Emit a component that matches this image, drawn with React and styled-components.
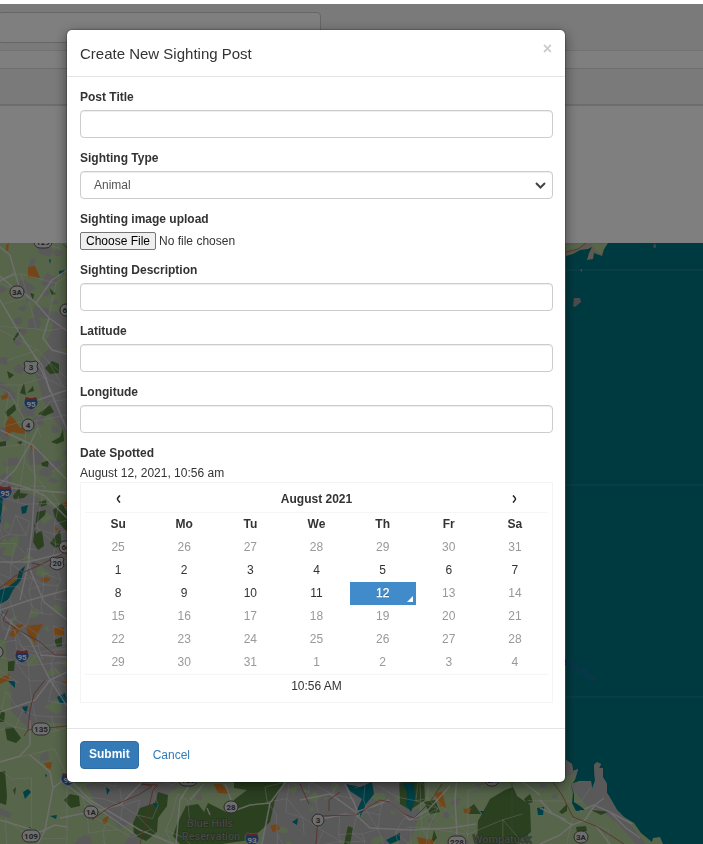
import React, { useState } from "react";
import styled, { createGlobalStyle, css } from "styled-components";

const GlobalStyle = createGlobalStyle`
  *, *::before, *::after { box-sizing: border-box; }
  body {
    margin: 0;
    background: #fff;
    color: #333;
    font: 12px/17px "Liberation Sans", Arial, Helvetica, sans-serif;
  }
  input, select, button { font: inherit; color: inherit; }
`;

/* ---------- page behind the dialog ---------- */

const Page = styled.div`
  display: flex;
  flex-direction: column;
  height: 100vh;
  overflow: hidden;
`;

const TopBar = styled.header`
  margin-top: 4px;
  padding: 8px 0 7px;
  background: #f5f5f5;
  border-bottom: 1px solid #e4e4e4;
`;

const SearchBox = styled.input`
  display: block;
  width: 46%;
  height: 31px;
  margin-left: -2px;
  padding: 0 12px;
  background: #fff;
  border: 1px solid #ccc;
  border-radius: 4px;
`;

const SubBar = styled.div`
  height: 38px;
  margin-top: 17px;
  background: #f5f5f5;
  border-top: 1px solid #ddd;
  border-bottom: 2px solid #dadada;
`;

const MapArea = styled.main`
  flex: 1;
  min-height: 0;
  margin-top: 137px;
`;

const MapSvg = styled.svg`
  display: block;
  width: 100%;
  height: 100%;
`;

/* ---------- dialog ---------- */

const Backdrop = styled.div`
  position: fixed;
  inset: 4px 0 0;
  overflow: auto;
  background: rgba(0, 0, 0, 0.5);
`;

const Dialog = styled.section`
  margin: 26px 138px 26px 67px;
  background: #fff;
  border-radius: 5px;
  box-shadow: 0 4px 13px rgba(0, 0, 0, 0.5), 0 0 1px 1px rgba(0, 0, 0, 0.2);
`;

const DialogHeader = styled.header`
  display: flex;
  justify-content: space-between;
  align-items: flex-start;
  padding: 14px 13px 12px;
  border-bottom: 1px solid #e5e5e5;
`;

const DialogTitle = styled.h4`
  margin: 0;
  font-size: 15px;
  line-height: 20px;
  font-weight: 400;
`;

const CloseButton = styled.button`
  padding: 0;
  border: 0;
  background: none;
  color: #ccc;
  font-size: 16px;
  line-height: 10px;
  font-weight: 700;
  cursor: pointer;
`;

const DialogBody = styled.div`
  padding: 12px 12px 25px 13px;
`;

const DialogFooter = styled.footer`
  display: flex;
  gap: 4px;
  padding: 12px 13px 13px;
  border-top: 1px solid #e5e5e5;
`;

const Field = styled.div`
  display: flex;
  flex-direction: column;
  margin-bottom: 12px;
`;

const Label = styled.label`
  margin-bottom: 4px;
  font-weight: 700;
`;

const controlStyle = css`
  width: 100%;
  height: 28px;
  padding: 0 10px;
  background: #fff;
  color: #555;
  border: 1px solid #ccc;
  border-radius: 4px;
  box-shadow: inset 0 1px 1px rgba(0, 0, 0, 0.075);
`;

const TextInput = styled.input`
  ${controlStyle}
`;

const SelectWrap = styled.div`
  position: relative;
`;

const Select = styled.select`
  ${controlStyle}
  display: block;
  padding: 0 13px;
  appearance: none;
`;

const Chevron = styled.svg`
  position: absolute;
  right: 7px;
  top: 11px;
  width: 11px;
  height: 7px;
  pointer-events: none;
`;

const FileInput = styled.input`
  height: 18px;
  line-height: 18px;

  &::file-selector-button {
    height: 18px;
    margin: 0 3px 0 0;
    padding: 0 5px;
    font: inherit;
    line-height: 16px;
    color: #000;
    background: #efefef;
    border: 1px solid #767676;
    border-radius: 2px;
  }
`;

const DateGroup = styled.div`
  display: flex;
  flex-direction: column;
`;

const DateHeading = styled.span`
  margin-bottom: 2px;
  font-weight: 700;
`;

const DateValue = styled.output`
  line-height: 18px;
`;

const Picker = styled.div`
  padding: 4px 4px 3px;
  border: 1px solid #f4f4f4;
`;

const Calendar = styled.table`
  width: 100%;
  table-layout: fixed;
  border-collapse: collapse;
  text-align: center;

  th, td { height: 23px; padding: 0; }
`;

const MonthRow = styled.tr`
  border-bottom: 1px solid #f6f6f6;
  && th { height: 25px; }
`;

const WeekdayRow = styled.tr`
  && th { height: 24px; }
`;

const TimeRow = styled.tr`
  border-top: 1px solid #f6f6f6;
  && td { height: 24px; }
`;

const BareButton = styled.button`
  display: block;
  width: 100%;
  height: 23px;
  padding: 0;
  border: 0;
  background: none;
  font-weight: ${(p) => (p.$bold ? 700 : 400)};
  line-height: 23px;
  cursor: pointer;
`;

const Arrow = styled.svg`
  display: block;
  margin: 0 auto;
  width: 5px;
  height: 8px;
`;

const DayButton = styled(BareButton)`
  position: relative;
  color: ${(p) => (p.$muted ? "#999" : "#333")};

  ${(p) =>
    p.$active &&
    css`
      color: #fff;
      background: #428bca;
      text-shadow: 0 -1px 0 rgba(0, 0, 0, 0.25);
      -webkit-text-stroke: 0.3px #fff;

      &::before {
        content: "";
        position: absolute;
        right: 3px;
        bottom: 3px;
        border-left: 6px solid transparent;
        border-bottom: 6px solid #fff;
      }
    `}
`;

const SubmitButton = styled.button`
  height: 28px;
  padding: 0 8px;
  color: #fff;
  font-weight: 700;
  background: #337ab7;
  border: 1px solid #2e6da4;
  border-radius: 4px;
  cursor: pointer;
`;

const CancelLink = styled.a`
  padding: 0 10px;
  line-height: 28px;
  color: #337ab7;
  text-decoration: none;
`;

/* ---------- map ---------- */

const C = {
  sea: "#007582",
  land: "#aeca97",
  urban: "#b2b2b2",
  forest: "#55803f",
  orange: "#e88a2c",
  road: "#e8e2e8",
  rail: "#b05a48",
  water: "#00808f",
};

const Road = styled.path`
  fill: none;
  stroke: ${(p) => (p.$rail ? C.rail : C.road)};
  stroke-width: ${(p) => (p.$w ? p.$w : 1)};
  stroke-linejoin: round;
  opacity: ${(p) => (p.$w > 1 || p.$rail ? 0.8 : 0.45)};
`;

const PlaceName = styled.text`
  font: 500 11px Roboto, sans-serif;
  fill: #8a9482;
  stroke: #46583c;
  stroke-width: 1px;
  paint-order: stroke;
  text-anchor: middle;
`;

const BayName = styled.text`
  font: 500 10px Roboto, sans-serif;
  fill: #1f68a0;
`;

const ShieldText = styled.text`
  font: 700 8px Roboto, sans-serif;
  text-anchor: middle;
  fill: ${(p) => (p.$light ? "#fff" : "#444")};
`;

function Route({ x, y, children }) {
  const chars = String(children).length;
  const w = [12, 14, 18][chars - 1];
  return (
    <g>
      <rect x={x - w / 2} y={y - 6} width={w} height="12" rx="6" fill="#ddd" stroke="#555" strokeWidth="1" />
      <ShieldText x={x} y={y + 3}>{children}</ShieldText>
    </g>
  );
}

function UsRoute({ x, y, children }) {
  return (
    <g transform={`translate(${x} ${y})`}>
      <path d="M-7 -4 L-5 -6 Q0 -4 5 -6 L7 -4 Q5 -1 7 3 Q6 6 0 7 Q-6 6 -7 3 Q-5 -1 -7 -4Z" fill="#ddd" stroke="#555" />
      <ShieldText y="3">{children}</ShieldText>
    </g>
  );
}

function Interstate({ x, y, children }) {
  return (
    <g transform={`translate(${x} ${y})`}>
      <path d="M-5 -6 Q0 -4 5 -6 Q9 0 5 4 Q3 6 0 7 Q-3 6 -5 4 Q-9 0 -5 -6Z" fill="#3767b0" stroke="#ddd" strokeWidth="0.6" />
      <path d="M-5 -6 Q0 -4 5 -6 L6 -3 H-6Z" fill="#c94747" />
      <ShieldText y="4" $light>{children}</ShieldText>
    </g>
  );
}

/* Small seeded generator, so the neighbourhood texture is the same on every draw. */
function seeded(seed) {
  let s = seed;
  return () => {
    s = (s * 16807) % 2147483647;
    return s / 2147483647;
  };
}

function patches(seed, count, [x, y, w, h], size) {
  const r = seeded(seed);
  let d = "";
  for (let i = 0; i < count; i += 1) {
    const cx = x + r() * w;
    const cy = y + r() * h;
    const n = 6 + Math.floor(r() * 3);
    const rad = size * (0.4 + r());
    for (let k = 0; k < n; k += 1) {
      const a = (k / n) * Math.PI * 2;
      const q = rad * (0.5 + r() * 0.8);
      d += `${k ? "L" : "M"}${(cx + Math.cos(a) * q * 1.2).toFixed(1)} ${(cy + Math.sin(a) * q).toFixed(1)}`;
    }
    d += "Z";
  }
  return d;
}

function streets(seed, [x, y, w, h], step) {
  const r = seeded(seed);
  const cols = Math.ceil(w / step) + 1;
  const rows = Math.ceil(h / step) + 1;
  const pts = [];
  for (let j = 0; j < rows; j += 1) {
    for (let i = 0; i < cols; i += 1) {
      pts.push([(x + (i + r() * 0.8) * step).toFixed(1), (y + (j + r() * 0.8) * step).toFixed(1)]);
    }
  }
  let d = "";
  for (let j = 0; j < rows; j += 1) {
    for (let i = 0; i < cols; i += 1) {
      const p = pts[j * cols + i];
      if (i + 1 < cols && r() < 0.65) d += `M${p}L${pts[j * cols + i + 1]}`;
      if (j + 1 < rows && r() < 0.7) d += `M${p}L${pts[(j + 1) * cols + i]}`;
      if (j + 1 < rows && i + 1 < cols && r() < 0.2) d += `M${p}L${pts[(j + 1) * cols + i + 1]}`;
    }
  }
  return d;
}

const LAND =
  "M0 243H566V760L572 764L573 771L578 769L575 780L571 785L573 793L572 803L576 811L585 810L580 806L574 802V794L571 784L579 781L591 781L592 789L595 781L594 765L597 762L601 764L599 768L603 768L603 777L607 784V793L612 801L617 810L624 817L634 823L641 833L652 842L653 838L660 837L663 844H0Z";

function SightingsMap() {
  return (
    <MapSvg viewBox="0 243 703 601" preserveAspectRatio="xMinYMin slice" role="img" aria-label="Map of sightings">
      <rect x="0" y="243" width="2000" height="1200" fill={C.sea} />
      <path d="M566 270H703M566 485H703M566 697H703" stroke="#3d929a" strokeWidth="1" opacity="0.6" />
      <clipPath id="mainland"><path d={LAND} /></clipPath>
      <g clipPath="url(#mainland)">
        <rect x="0" y="243" width="703" height="601" fill={C.land} />
        {/* built-up areas */}
        <g fill={C.urban}>
          <path d={patches(71, 34, [0, 245, 72, 130], 5)} />
          <path d="M28 320L36 317L42 322L38 329L28 328ZM45 314L67 316V348L54 350L48 340L53 325ZM16 282L24 280L30 286L27 297L18 291Z" />
          <path d="M41 356L50 348L68 352V436L54 420L43 400L37 378Z" />
          <path d={patches(23, 22, [0, 385, 70, 100], 6)} />
          <path d="M0 478L20 490L35 496L67 518V640H0Z" />
          <path d="M5 640L68 622V724L45 722L28 728L12 712Z" />
          <path d="M41 754L48 751L49 760L40 761ZM0 808L12 813L10 818L0 815Z" />
          <path d="M85 784L150 776L182 784L165 796L148 815L120 828L96 803ZM124 844L146 815L138 844Z" />
          <path d="M300 776H410L395 800L420 812L410 844H262L270 800L284 782Z" />
          <path d={patches(91, 14, [84, 784, 120, 60], 6)} />
          <path d={patches(17, 18, [410, 784, 150, 60], 3)} />
          <path d="M571 783L607 780L612 802L646 844H636L616 822L602 812L587 806L573 790ZM566 760H580V775H566ZM593 763H603V782H594Z" />
        </g>
        {/* small parks inside the built-up areas */}
        <g fill={C.land}>
          <path d={patches(44, 12, [0, 490, 66, 140], 5)} />
          <path d={patches(15, 12, [0, 640, 66, 70], 5)} />
          <path d={patches(63, 20, [265, 784, 150, 60], 4)} />
          <path d="M2 555L10 538L18 535L19 542L13 557Z" />
        </g>
        {/* woodland */}
        <g fill={C.forest}>
          <path d="M45 368L52 361L59 364L59 373L50 374ZM7 371L14 375L9 379ZM13 339L20 329L19 334L14 341ZM49 288L56 294L52 295ZM30 293L34 294L33 300ZM20 393L24 383L26 395ZM27 393L33 386L34 391ZM38 414L50 405L54 412L45 416ZM5 412L15 404L16 410L8 417Z" />
          <path d="M51 442L60 437L63 429L64 441L57 444ZM0 442L6 441L6 446L0 447ZM41 463L49 460L48 467L42 466ZM17 442L22 441L21 445ZM13 496L20 487L20 493L28 494L24 498L14 499Z" />
          <path d="M53 510L62 503L67 512V532L55 518ZM37 512L46 510L45 515L34 525L36 534L42 530L44 546L38 550L33 542ZM39 502L46 500L47 505L40 507ZM50 543L60 530L62 546L55 548Z" />
          <path d="M54 640L62 637L62 646L57 647ZM8 662L15 660L14 671L8 671ZM0 710L5 713L4 722L0 722ZM5 728L13 727L21 738L16 743L7 740ZM0 772L5 771L7 796L6 805L0 803ZM13 790L16 787L15 795ZM64 800L70 794L79 796L80 806L71 808ZM28 827L32 828L31 832Z" />
          <path d="M133 823L140 808L155 803L158 792L168 795L167 806L158 818L157 832L146 841L134 835Z" />
          <path d="M177 824L186 806L198 804L204 812L208 803L226 812L235 799L247 790L234 788V782H284L275 800L270 822L250 840L222 844H180L173 836Z" />
          <path d="M399 776H424L425 800L410 810L400 804ZM424 802L435 800L440 812L430 814ZM344 844L348 826L353 828L350 844ZM434 830L437 838L431 844Z" />
          <path d="M478 821L490 799L505 790L513 787L517 796L530 805L531 832L516 844H477ZM524 799L530 794L533 802L527 804ZM464 812L474 804L481 814L470 814Z" />
          <path d="M559 812L567 804L567 811L562 814ZM576 827L586 826L587 831L577 832ZM591 810L603 811L608 812L601 815Z" />
        </g>
        {/* commercial areas */}
        <g fill={C.orange}>
          <path d="M28 267L35 266L40 278L28 277ZM6 245L9 243L8 251L6 250ZM1 396L9 393L8 398L2 400ZM5 425L10 415L15 420L20 428L27 427L25 434L12 432L6 436ZM30 444L34 447L32 452Z" />
          <path d="M54 526L59 529L56 531ZM3 586L14 578L20 575L18 582L10 585ZM41 579L46 577L51 579L47 582L43 582ZM63 503L67 501V506L64 507Z" />
          <path d="M9 636L14 625L24 624L15 637ZM26 626L43 624L36 636L35 644L27 632ZM54 628L64 627L64 635L54 635ZM0 678L9 674L9 680L0 684ZM44 763L52 762L51 769L47 768ZM62 682L67 680V684Z" />
          <path d="M214 784L221 784L228 790L230 794L218 793ZM270 826L277 824L280 829L273 832ZM102 820L109 815L107 823L104 824ZM435 794L442 791L446 808L440 806ZM463 809L471 808L470 813L465 813ZM417 837L433 840V844H419Z" />
        </g>
        {/* ponds */}
        <g fill={C.water}>
          <path d="M59 271L65 270L63 274H59ZM49 259L51 260L50 264ZM21 507L28 505L26 513L22 514ZM0 492L3 497L1 520L0 524ZM0 590L8 587L17 580L19 571L25 566L21 580L13 590L8 600L0 604ZM8 681L15 681L15 688ZM57 697L65 693L67 703L60 703ZM23 792L28 789L31 792L25 799ZM45 774L47 775L46 778ZM50 816L57 815L56 819ZM22 707L28 706L26 714ZM0 613L3 612L2 616Z" />
          <path d="M106 787L110 790L107 795ZM153 803L160 803L156 808ZM292 822L298 818L297 825Z" />
          <path d="M346 784L360 787L372 782L374 794L366 804L360 818L356 812L362 799L350 791ZM403 784L414 782L415 800L411 812L406 804L407 793ZM386 840L400 833V840L390 844ZM537 808L544 807L543 815L538 815ZM480 811L484 811L483 815Z" />
        </g>
        {/* side streets */}
        <Road d={streets(11, [-8, 240, 80, 130], 26)} />
        <Road d={streets(52, [-8, 370, 80, 110], 22)} />
        <Road d={streets(37, [-6, 485, 78, 155], 14)} />
        <Road d={streets(82, [-6, 640, 78, 85], 17)} />
        <Road d={streets(29, [-8, 740, 90, 110], 36)} />
        <Road d={streets(59, [80, 776, 90, 76], 17)} />
        <Road d={streets(75, [265, 776, 145, 76], 16)} />
        <Road d={streets(47, [420, 776, 140, 80], 34)} />
        {/* main roads */}
        <Road $w={1.5} d="M0 281L15 273L10 255L0 247M15 273L20 290L36 303L49 318L67 331M36 303L52 280L67 270M0 300L20 334L34 355L42 365L50 392M17 291L0 276M49 318L43 338L52 350L67 354" />
        <Road $w={1.5} d="M34 355L46 380L67 430M0 480L28 488L45 496L67 518M0 487L67 493M0 430L33 445L67 480M33 445L35 480L32 530L28 565L20 600M38 428L30 444L15 470L0 484M38 400L67 390" />
        <Road $w={1.5} d="M0 562H28L67 552M0 610L30 600L67 590M28 565L44 602L67 620M0 612L30 640L50 680L67 706M40 655L67 657M12 620L5 640M50 680L35 700L0 712M50 680L67 672" />
        <Road $w={1.5} d="M0 762L20 756L30 745V720M30 755L50 772L53 788L45 830L38 844M53 788L67 777M0 820L40 832L55 825L67 827M67 777L90 800L140 830L174 844M60 780L92 804L137 836" />
        <Road $w={1.5} d="M195 776L180 800L176 844M204 784L190 800M225 784L231 800L231 812L250 805L270 803L290 776M207 808L210 815M270 803L262 844M142 782L120 805L91 812L60 818" />
        <Road $w={1.5} d="M300 800L330 794L356 812L380 804L388 800L410 820L428 810L450 786M356 815L370 828L410 830L450 828M318 820L345 814L360 816L345 784M457 776L455 800L457 835M450 828L476 824M515 776L540 795" />
        <Road $w={1.5} d="M540 800L552 813L572 825L560 835L540 844M572 825L585 820L595 805L604 798M580 811L594 805L610 812L632 824M540 808L566 820M610 812L626 828L640 838M596 826L610 844" />
        {/* rail lines */}
        <Road $rail d="M0 588L15 576L40 565L60 555L67 551M40 565L32 563M8 610L3 620L15 628L40 642L55 655L67 655M45 680L34 694L30 710L28 730L24 736M28 730L67 726" />
        <Road $rail d="M92 820L108 808L140 794L152 786L141 784L158 785L153 790L140 844M300 784L309 804M316 844L318 816L356 815L380 800L390 802L404 814L414 818L430 802L442 784" />
        <Road $rail d="M329 811V800L340 792M553 782L562 795L573 817L596 826L624 844M63 244L67 248" />
        <path d="M512 782V844" stroke="#6f8c60" strokeWidth="0.7" />
      </g>
      {/* headland and islands */}
      <path d="M566 243H608L604 249L602 256L594 253L593 259L587 260L589 253L592 247L588 249L580 250L573 254L566 256Z" fill="#b9b39f" />
      <path d="M566 246L580 243L584 245L574 251L566 253ZM592 244H607L601 254L596 251Z" fill={C.land} />
      <Road $rail d="M566 252L578 249L586 243" />
      <path d="M574 298L580 298L581 302L575 307L573 306ZM653 247L655 243L656 248ZM580 270L582 269V272Z" fill="#999" />
      <BayName transform="translate(544 652) rotate(31)">chusetts Bay</BayName>
      <PlaceName x="210" y="827">Blue Hills</PlaceName>
      <PlaceName x="211" y="840">Reservation</PlaceName>
      <PlaceName x="502" y="843">Wompatuck</PlaceName>
      <Route x={43} y={242}>129</Route>
      <Route x={17} y={292}>3A</Route>
      <Route x={67} y={310}>62</Route>
      <UsRoute x={31} y={367}>3</UsRoute>
      <Interstate x={31} y={403}>95</Interstate>
      <Route x={28} y={425}>4</Route>
      <Interstate x={5} y={492}>95</Interstate>
      <Route x={66} y={547}>60</Route>
      <UsRoute x={57} y={563}>20</UsRoute>
      <Route x={-3} y={652}>9</Route>
      <Interstate x={22} y={656}>95</Interstate>
      <Route x={41} y={729}>135</Route>
      <Interstate x={68} y={779}>95</Interstate>
      <Route x={31} y={836}>109</Route>
      <Route x={91} y={812}>1A</Route>
      <Route x={188} y={780}>138</Route>
      <Route x={231} y={807}>28</Route>
      <Interstate x={252} y={839}>93</Interstate>
      <Route x={318} y={820}>3</Route>
      <Route x={457} y={842}>228</Route>
      <Route x={492} y={780}>3A</Route>
      <Route x={581} y={837}>3A</Route>
    </MapSvg>
  );
}

/* ---------- date picker ---------- */

const DAY_NAMES = ["Su", "Mo", "Tu", "We", "Th", "Fr", "Sa"];

const WEEKS = [
  [25, 26, 27, 28, 29, 30, 31],
  [1, 2, 3, 4, 5, 6, 7],
  [8, 9, 10, 11, 12, 13, 14],
  [15, 16, 17, 18, 19, 20, 21],
  [22, 23, 24, 25, 26, 27, 28],
  [29, 30, 31, 1, 2, 3, 4],
];

function DatePicker({ selected, onSelect }) {
  return (
    <Picker>
      <Calendar>
        <thead>
          <MonthRow>
            <th>
              <BareButton type="button" aria-label="Previous month">
                <Arrow viewBox="0 0 5 8"><path d="M4 .5Q1 3.500 1.500 4Q1 4.500 4 7.500" fill="none" stroke="#222" strokeWidth="1.6" /></Arrow>
              </BareButton>
            </th>
            <th colSpan={5}><BareButton type="button" $bold>August 2021</BareButton></th>
            <th>
              <BareButton type="button" aria-label="Next month">
                <Arrow viewBox="0 0 5 8"><path d="M1 .5Q4 3.500 3.500 4Q4 4.500 1 7.500" fill="none" stroke="#222" strokeWidth="1.6" /></Arrow>
              </BareButton>
            </th>
          </MonthRow>
          <WeekdayRow>{DAY_NAMES.map((d) => <th key={d} scope="col">{d}</th>)}</WeekdayRow>
        </thead>
        <tbody>
          {WEEKS.map((week, w) => (
            <tr key={w}>
              {week.map((day) => {
                const inRange = (w === 1 || w === 2) && day <= 12;
                return (
                  <td key={day}>
                    <DayButton
                      type="button"
                      $muted={!inRange}
                      $active={inRange && day === selected}
                      disabled={!inRange}
                      onClick={() => onSelect(day)}
                    >
                      {day}
                    </DayButton>
                  </td>
                );
              })}
            </tr>
          ))}
        </tbody>
        <tfoot>
          <TimeRow><td colSpan={7}><BareButton type="button">10:56 AM</BareButton></td></TimeRow>
        </tfoot>
      </Calendar>
    </Picker>
  );
}

export default function App() {
  const [day, setDay] = useState(12);

  return (
    <>
      <GlobalStyle />
      <Page>
        <TopBar><SearchBox type="search" aria-label="Search" /></TopBar>
        <SubBar />
        <MapArea><SightingsMap /></MapArea>
      </Page>
      <Backdrop>
        <Dialog role="dialog" aria-modal="true" aria-labelledby="dialog-title">
          <DialogHeader>
            <DialogTitle id="dialog-title">Create New Sighting Post</DialogTitle>
            <CloseButton type="button" aria-label="Close">×</CloseButton>
          </DialogHeader>
          <form onSubmit={(e) => e.preventDefault()}>
            <DialogBody>
              <Field>
                <Label htmlFor="title">Post Title</Label>
                <TextInput id="title" type="text" />
              </Field>
              <Field>
                <Label htmlFor="type">Sighting Type</Label>
                <SelectWrap>
                  <Select id="type"><option>Animal</option></Select>
                  <Chevron viewBox="0 0 11 7" aria-hidden="true">
                    <path d="M1 1L5.500 5.500L10 1" fill="none" stroke="#444" strokeWidth="2" />
                  </Chevron>
                </SelectWrap>
              </Field>
              <Field>
                <Label htmlFor="image">Sighting image upload</Label>
                <FileInput id="image" type="file" />
              </Field>
              <Field>
                <Label htmlFor="description">Sighting Description</Label>
                <TextInput id="description" type="text" />
              </Field>
              <Field>
                <Label htmlFor="latitude">Latitude</Label>
                <TextInput id="latitude" type="text" />
              </Field>
              <Field>
                <Label htmlFor="longitude">Longitude</Label>
                <TextInput id="longitude" type="text" />
              </Field>
              <DateGroup role="group" aria-labelledby="date-label">
                <DateHeading id="date-label">Date Spotted</DateHeading>
                <DateValue>August {day}, 2021, 10:56 am</DateValue>
                <DatePicker selected={day} onSelect={setDay} />
              </DateGroup>
            </DialogBody>
            <DialogFooter>
              <SubmitButton type="submit">Submit</SubmitButton>
              <CancelLink href="#">Cancel</CancelLink>
            </DialogFooter>
          </form>
        </Dialog>
      </Backdrop>
    </>
  );
}
